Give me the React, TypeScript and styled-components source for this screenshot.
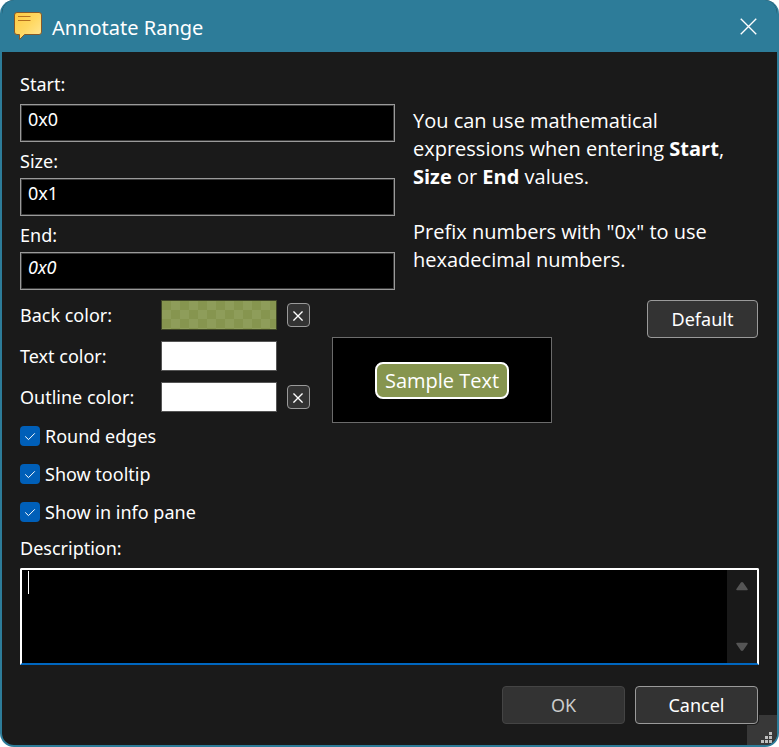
import React from "react";
import styled, { createGlobalStyle } from "styled-components";

const ui = `"Noto Sans", "Open Sans", sans-serif`;
const accent = "#2d7c99";
const surface = "#1a1a1a";

const GlobalStyle = createGlobalStyle`
  *, *::before, *::after { box-sizing: border-box; }
  body { margin: 0; background: #fff; color: #fff; font-family: ${ui}; }
  button, input, textarea { font: inherit; color: inherit; margin: 0; }
`;

const Dialog = styled.form`
  position: relative;
  display: flex;
  flex-direction: column;
  min-height: 100vh;
  border: 2px solid ${accent};
  border-top: 0;
  border-radius: 14px;
  overflow: hidden;
  background: ${surface};
  font-size: 18px;
  line-height: 22px;
`;

const TitleBar = styled.header`
  display: flex;
  align-items: center;
  gap: 9px;
  height: 52px;
  padding: 0 20px 0 11px;
  background: ${accent};
`;

const Title = styled.h1`
  flex: 1;
  margin: 0;
  padding-top: 3px;
  font-size: 20px;
  line-height: 28px;
  font-weight: 400;
`;

const CloseButton = styled.button`
  display: flex;
  padding: 0;
  border: 0;
  background: none;
`;

const Body = styled.main`
  flex: 1;
  display: flex;
  flex-direction: column;
  padding: 21px 18px;
`;

const RangeSection = styled.section`
  display: grid;
  grid-template-columns: minmax(0, 375fr) minmax(0, 346fr);
  gap: 18px;
`;

const Fields = styled.div`
  display: flex;
  flex-direction: column;
  gap: 8px;
`;

const Field = styled.div`
  display: flex;
  flex-direction: column;
  gap: 6px;
  &:first-child { gap: 9px; }
`;

const TextInput = styled.input<{ $italic?: boolean }>`
  width: 100%;
  height: 38px;
  padding: 0 7px 8px;
  border: 1px solid #9a9a9a;
  border-radius: 0;
  background: #000;
  outline: 1px solid #3a3a3a;
  outline-offset: -2px;
  font-style: ${(p) => (p.$italic ? "italic" : "normal")};
`;

const Help = styled.div`
  padding-top: 34px;
  font-family: "Open Sans", sans-serif;
  font-size: 20px;
  line-height: 28px;
  p { margin: 0 0 27px; }
  p:last-child { margin-bottom: 0; }
`;

const StyleSection = styled.section`
  display: flex;
  align-items: flex-start;
  margin-top: 10px;
  padding-right: 1px;
`;

const Options = styled.div`
  width: 290px;
`;

const ColorRows = styled.div`
  display: grid;
  gap: 11px;
`;

const ColorRow = styled.div`
  display: grid;
  grid-template-columns: 131px 116px 23px;
  column-gap: 10px;
  align-items: center;
`;

const Swatch = styled.button<{ $checkered?: boolean }>`
  height: 30px;
  padding: 0;
  border: 1px solid #555;
  ${(p) =>
    p.$checkered
      ? `border-color: #3f4626;
         background: repeating-conic-gradient(#8e9d5a 0 25%, #86954f 0 50%) 0 0 / 18px 18px padding-box;`
      : `background: #fff;`}
`;

const ClearButton = styled.button`
  display: grid;
  place-items: center;
  height: 24px;
  padding: 2px 1px 0 0;
  border: 1px solid #9a9a9a;
  border-radius: 4px;
  background: #333;
`;

const Checks = styled.div`
  display: grid;
  gap: 18px;
  margin-top: 14px;
`;

const CheckLabel = styled.label`
  display: flex;
  align-items: center;
  gap: 5px;
  height: 20px;
`;

const CheckMark = styled.span`
  display: grid;
  width: 20px;
  height: 20px;
  > * { grid-area: 1 / 1; }
  svg { pointer-events: none; }
`;

const CheckInput = styled.input`
  appearance: none;
  width: 20px;
  height: 20px;
  border: 1px solid #9a9a9a;
  border-radius: 4px;
  &:checked { border: 0; background: #005fb8; }
  &:not(:checked) + svg { visibility: hidden; }
`;

const Preview = styled.div`
  display: grid;
  place-items: center;
  width: 220px;
  height: 86px;
  margin: 37px auto 0 22px;
  border: 1px solid #6b6b6b;
  background: #000;
`;

const Sample = styled.span`
  padding: 3px 8px 2px;
  border: 2px solid #fff;
  border-radius: 8px;
  background: #86954f;
  font-family: "Open Sans", sans-serif;
  font-size: 20px;
  line-height: 28px;
`;

const PushButton = styled.button<{ $wide?: boolean }>`
  width: ${(p) => (p.$wide ? 123 : 111)}px;
  height: 38px;
  padding: 0;
  border: 1px solid #9a9a9a;
  border-radius: 4px;
  background: #333;
  &:disabled { border-color: #444; color: #ccc; }
`;

const DescriptionLabel = styled.label`
  margin-top: 15px;
`;

const Memo = styled.div`
  position: relative;
  display: flex;
  height: 97px;
  margin-top: 9px;
  border: 2px solid #fff;
  border-bottom-color: #0067c0;
  border-radius: 2px 2px 0 0;
`;

const MemoText = styled.textarea`
  flex: 1;
  min-width: 0;
  padding: 0 6px;
  border: 0;
  outline: 0;
  resize: none;
  background: #000;
  caret-color: transparent;
`;

const Caret = styled.span`
  position: absolute;
  top: 1px;
  left: 6px;
  width: 1px;
  height: 23px;
  background: #fff;
`;

const ScrollBar = styled.div`
  display: flex;
  flex-direction: column;
  justify-content: space-between;
  width: 30px;
  background: #191919;
`;

const ScrollButton = styled.button`
  display: grid;
  place-items: center;
  height: 32px;
  padding: 0;
  border: 0;
  background: none;
`;

const Actions = styled.footer`
  display: flex;
  justify-content: flex-end;
  gap: 10px;
  margin-top: 21px;
  padding-right: 1px;
  ${PushButton}:last-child {
    position: relative;
    z-index: 1;
    box-shadow: 0 0 0 1px ${surface};
  }
`;

const SizeGrip = styled.svg`
  position: absolute;
  right: 0;
  bottom: 0;
`;

const NoteIcon = () => (
  <svg width="30" height="30" viewBox="0 0 30 30" aria-hidden="true">
    <defs>
      <linearGradient id="note" x1="0" y1="0" x2="1" y2="1">
        <stop offset="0" stopColor="#ffc940" />
        <stop offset="0.5" stopColor="#ffd862" />
        <stop offset="1" stopColor="#ffe99c" />
      </linearGradient>
    </defs>
    <path
      d="M4 1.500H26Q28.500 1.500 28.500 4V21Q28.500 23.500 26 23.500H11.500L6.500 28.500V23.500H4Q1.500 23.500 1.500 21V4Q1.500 1.500 4 1.500Z"
      fill="url(#note)"
      stroke="#85592a"
      strokeLinejoin="round"
    />
    <path d="M5 5.500H17.500M5 9.500H17.500" stroke="#b5701f" />
  </svg>
);

const Cross = ({ size }: { size: number }) => (
  <svg width={size} height={size} viewBox="0 0 16 16" aria-hidden="true">
    <path d="M0.700 0.700L15.300 15.300M15.300 0.700L0.700 15.300" stroke="#fff" strokeWidth={size > 12 ? 1.3 : 2.2} />
  </svg>
);

const Check = () => (
  <svg width="20" height="20" viewBox="0 0 20 20" aria-hidden="true">
    <path d="M5.200 10.400L8.500 13.600L14.800 7.300" fill="none" stroke="#fff" />
  </svg>
);

const Arrow = ({ down }: { down?: boolean }) => (
  <svg width="12" height="10" viewBox="0 0 12 10" aria-hidden="true">
    <path
      d={down ? "M1 1.500H11L6.500 8Q6 8.500 5.500 8Z" : "M1 8.500H11L6.500 2Q6 1.500 5.500 2Z"}
      fill="#555"
      stroke="#555"
      strokeWidth="1.500"
      strokeLinejoin="round"
    />
  </svg>
);

const gripDots = [[22, 17], [18, 21], [22, 21], [14, 25], [18, 25], [22, 25]];

const colors = [
  { name: "Back color:", checkered: true, clearable: true },
  { name: "Text color:", checkered: false, clearable: false },
  { name: "Outline color:", checkered: false, clearable: true },
];

export default function App() {
  return (
    <>
      <GlobalStyle />
      <Dialog onSubmit={(e: React.FormEvent) => e.preventDefault()}>
        <TitleBar>
          <NoteIcon />
          <Title>Annotate Range</Title>
          <CloseButton type="button" aria-label="Close">
            <Cross size={17} />
          </CloseButton>
        </TitleBar>
        <Body>
          <RangeSection>
            <Fields>
              <Field>
                <label htmlFor="start">Start:</label>
                <TextInput id="start" defaultValue="0x0" />
              </Field>
              <Field>
                <label htmlFor="size">Size:</label>
                <TextInput id="size" defaultValue="0x1" />
              </Field>
              <Field>
                <label htmlFor="end">End:</label>
                <TextInput id="end" defaultValue="0x0" $italic />
              </Field>
            </Fields>
            <Help>
              <p>
                You can use mathematical expressions when entering <b>Start</b>, <b>Size</b> or <b>End</b> values.
              </p>
              <p>Prefix numbers with "0x" to use hexadecimal numbers.</p>
            </Help>
          </RangeSection>
          <StyleSection>
            <Options>
              <ColorRows>
                {colors.map((c, i) => (
                  <ColorRow key={c.name}>
                    <label htmlFor={"color" + i}>{c.name}</label>
                    <Swatch id={"color" + i} type="button" $checkered={c.checkered} />
                    {c.clearable && (
                      <ClearButton type="button" aria-label={"Clear " + c.name}>
                        <Cross size={10} />
                      </ClearButton>
                    )}
                  </ColorRow>
                ))}
              </ColorRows>
              <Checks>
                {["Round edges", "Show tooltip", "Show in info pane"].map((text) => (
                  <CheckLabel key={text}>
                    <CheckMark>
                      <CheckInput type="checkbox" defaultChecked />
                      <Check />
                    </CheckMark>
                    {text}
                  </CheckLabel>
                ))}
              </Checks>
            </Options>
            <Preview>
              <Sample>Sample Text</Sample>
            </Preview>
            <PushButton type="button">Default</PushButton>
          </StyleSection>
          <DescriptionLabel htmlFor="description">Description:</DescriptionLabel>
          <Memo>
            <MemoText id="description" />
            <Caret />
            <ScrollBar>
              <ScrollButton type="button" aria-label="Scroll up">
                <Arrow />
              </ScrollButton>
              <ScrollButton type="button" aria-label="Scroll down">
                <Arrow down />
              </ScrollButton>
            </ScrollBar>
          </Memo>
          <Actions>
            <PushButton $wide disabled>
              OK
            </PushButton>
            <PushButton $wide type="button">
              Cancel
            </PushButton>
          </Actions>
        </Body>
        <SizeGrip width="30" height="30" viewBox="0 0 30 30" aria-hidden="true">
          <rect width="30" height="30" fill="#383838" />
          {gripDots.map(([x, y]) => (
            <rect key={x + "-" + y} x={x} y={y} width="3" height="3" fill="#bfbfbf" />
          ))}
        </SizeGrip>
      </Dialog>
    </>
  );
}
